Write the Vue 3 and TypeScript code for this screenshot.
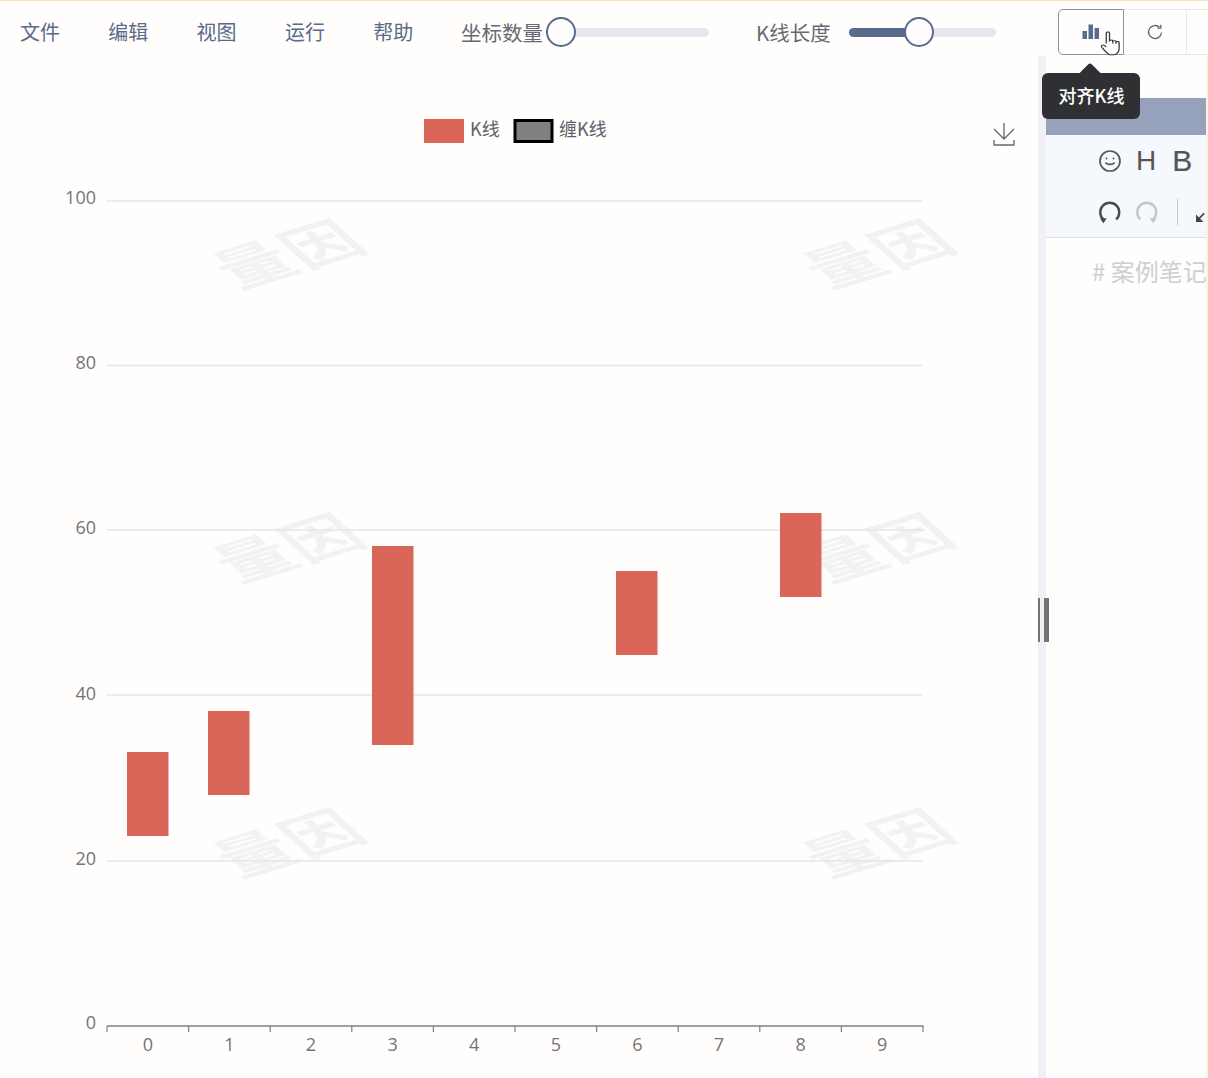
<template>
  <div class="page">
    <header class="topbar">
      <nav class="menu">
        <span v-for="m in menus" :key="m" class="menu-item">{{ m }}</span>
      </nav>

      <div class="slider-group count-group">
        <span class="slider-label">坐标数量</span>
        <div class="slider count-slider">
          <div class="track"></div>
          <div class="thumb" style="left: -1px"></div>
        </div>
      </div>

      <div class="slider-group length-group">
        <span class="slider-label">K线长度</span>
        <div class="slider length-slider">
          <div class="track"></div>
          <div class="fill"></div>
          <div class="thumb" style="left: 55px"></div>
        </div>
      </div>

      <div class="tool-buttons">
        <button class="tool-btn active">
          <svg width="18" height="16" viewBox="0 0 18 16">
            <rect x="0.5" y="7" width="4.500" height="8" fill="#5a6a8f" />
            <rect x="6.500" y="0.500" width="4.500" height="14.500" fill="#5a6a8f" />
            <rect x="12.500" y="4" width="4.500" height="11" fill="#5a6a8f" />
          </svg>
          <svg class="hand" width="20" height="26" viewBox="0 0 16 27" preserveAspectRatio="none">
            <path
              d="M5 14V3.200C5 1.800 7.600 1.800 7.600 3.200V12M7.600 11.500c0-1.400 2.600-1.400 2.600 0V14M10.200 12c0-1.300 2.600-1.300 2.600 0v2.400M12.800 13c0-1.300 2.500-1.300 2.500 0v6c0 3-1.600 5.600-3.600 6.600H7.500C5.500 24 3.500 21 1.400 18c-1-1.500.7-3 2-2L5 17.500"
              fill="#fff"
              stroke="#333"
              stroke-width="1"
              stroke-linejoin="round"
            />
          </svg>
        </button>
        <button class="tool-btn refresh">
          <svg width="18" height="18" viewBox="0 0 18 18" fill="none" stroke="#666" stroke-width="1.300">
            <path d="M15.500 9.500a6.500 6.500 0 1 1-2-5.200" />
            <path d="M14.800 1.800v3.400h-3.400" />
          </svg>
        </button>
        <button class="tool-btn rest"></button>
      </div>

      <div class="tooltip">对齐K线</div>
    </header>

    <main class="body">
      <section class="chart-pane">
        <svg class="chart" width="1038" height="1022" viewBox="0 56 1038 1022">
          <!-- watermark -->
          <text
            v-for="w in watermarks"
            :key="w.x + '-' + w.y"
            class="mark"
            :transform="`matrix(0.98 -0.3 0.65 0.59 ${w.x} ${w.y})`"
          >量因</text>

          <!-- legend -->
          <rect x="424" y="119" width="40" height="24" fill="#da665a" />
          <text class="legend-text" x="470" y="136">K线</text>
          <rect x="515" y="120.500" width="37" height="21" fill="#808080" stroke="#000" stroke-width="3" />
          <text class="legend-text" x="559" y="136">缠K线</text>

          <!-- download -->
          <g fill="none" stroke="#666" stroke-width="1.300">
            <path d="M1004 123v16M994 129l10 10 10-10" />
            <path d="M994 140v5h20v-5" />
          </g>

          <!-- y axis -->
          <g v-for="g in yTicks" :key="g.label">
            <line v-if="g.label !== '0'" x1="107" x2="923" :y1="g.y" :y2="g.y" stroke="#e6e6e8" stroke-width="1.500" />
            <text class="axis-text" x="96" :y="g.labelY" text-anchor="end">{{ g.label }}</text>
          </g>

          <!-- x axis -->
          <line x1="107" x2="923.500" y1="1026" y2="1026" stroke="#7f8085" stroke-width="1.500" />
          <line
            v-for="i in 11"
            :key="'t' + i"
            :x1="tickX(i - 1)"
            :x2="tickX(i - 1)"
            y1="1026"
            y2="1032"
            stroke="#7f8085"
            stroke-width="1.200"
          />
          <text
            v-for="i in 10"
            :key="'l' + i"
            class="axis-text"
            :x="tickX(i - 1) + 40.800"
            y="1051"
            text-anchor="middle"
          >{{ i - 1 }}</text>

          <!-- bars -->
          <rect
            v-for="b in bars"
            :key="b.x"
            :x="b.x"
            :y="b.top"
            width="41.500"
            :height="b.bottom - b.top"
            fill="#da665a"
          />
        </svg>
      </section>

      <div class="splitter">
        <div class="handle"></div>
      </div>

      <aside class="notes">
        <div class="notes-head"></div>
        <div class="notes-toolbar">
          <div class="icon-row">
            <svg width="24" height="24" viewBox="0 0 24 24" fill="none" stroke="#555" stroke-width="1.700">
              <circle cx="12" cy="12" r="10" />
              <path d="M7.500 13.500c1 2.500 8 2.500 9 0" />
              <circle cx="8.500" cy="9.500" r="0.900" fill="#555" stroke="none" />
              <circle cx="15.500" cy="9.500" r="0.900" fill="#555" stroke="none" />
            </svg>
            <span class="letter">H</span>
            <span class="letter bold">B</span>
          </div>
          <div class="icon-row second">
            <svg width="24" height="26" viewBox="0 0 24 26" fill="none" stroke="#4a4a4a" stroke-width="2.400">
              <path d="M5.500 20.500A9.700 9.700 0 1 1 18.500 20.500" />
              <path d="M2 19.500h7l-3.500 5z" fill="#4a4a4a" stroke="none" />
            </svg>
            <svg width="24" height="26" viewBox="0 0 24 26" fill="none" stroke="#c6c6c9" stroke-width="2.400">
              <path d="M5.500 20.500A9.700 9.700 0 1 1 18.500 20.500" />
              <path d="M15 19.500h7l-3.500 5z" fill="#c6c6c9" stroke="none" />
            </svg>
            <span class="tb-divider"></span>
            <svg class="shrink" width="11" height="11" viewBox="0 0 12 12">
              <path d="M10 1.500 4.500 7M2 5v5h5z" stroke="#444" stroke-width="1.800" fill="#444" />
            </svg>
          </div>
        </div>
        <div class="editor">
          <span class="placeholder"># 案例笔记</span>
        </div>
      </aside>
    </main>
  </div>
</template>

<script setup lang="ts">
const menus = ['文件', '编辑', '视图', '运行', '帮助']

const yTicks = [
  { label: '100', y: 201, labelY: 204 },
  { label: '80', y: 365.5, labelY: 369 },
  { label: '60', y: 530, labelY: 534 },
  { label: '40', y: 695, labelY: 700 },
  { label: '20', y: 861, labelY: 865 },
  { label: '0', y: 1026, labelY: 1029 },
]

const bars = [
  { x: 127, top: 752, bottom: 836 },
  { x: 208, top: 711, bottom: 795 },
  { x: 372, top: 546, bottom: 745 },
  { x: 616, top: 571, bottom: 655 },
  { x: 780, top: 513, bottom: 597 },
]

const watermarks = [
  { x: 238, y: 289 },
  { x: 828, y: 289 },
  { x: 238, y: 583 },
  { x: 828, y: 583 },
  { x: 238, y: 878 },
  { x: 828, y: 878 },
]

const tickX = (i: number) => 107 + i * 81.6
</script>

<style>
html,
body {
  margin: 0;
  background: #fffefd;
}
</style>

<style scoped>
.page {
  width: 1208px;
  height: 1078px;
  overflow: hidden;
  display: flex;
  flex-direction: column;
  background: #fffefd;
  font-family: "Noto Sans CJK SC", "Noto Sans", sans-serif;
}

.topbar {
  position: relative;
  flex: none;
  height: 56px;
  border-top: 1px solid #f6e0b4;
  display: flex;
  align-items: flex-start;
  padding-left: 20px;
  box-sizing: border-box;
}

.menu {
  display: flex;
  gap: 48.300px;
  width: 441px;
  flex: none;
  margin-top: 16px;
}

.menu-item {
  font-size: 20px;
  line-height: 29px;
  color: #5c6a8a;
}

.slider-group {
  display: flex;
  flex: none;
  margin-top: 17px;
}

.slider-label {
  font-size: 20.500px;
  line-height: 29px;
  color: #676a72;
  white-space: nowrap;
}

.count-group {
  width: 295px;
}

.count-slider {
  margin-left: 4px;
  margin-top: -1px;
  width: 162px;
}

.length-group {
  width: 302px;
}

.length-slider {
  margin-left: 18px;
  margin-top: -1px;
  width: 147px;
}

.slider {
  position: relative;
  height: 29px;
}

.track {
  position: absolute;
  left: 0;
  right: 0;
  top: 11px;
  height: 9px;
  border-radius: 5px;
  background: #e6e6ef;
}

.fill {
  position: absolute;
  left: 0;
  top: 11px;
  width: 62px;
  height: 9px;
  border-radius: 5px 0 0 5px;
  background: #5a6a8f;
}

.thumb {
  position: absolute;
  top: 0;
  width: 30px;
  height: 30px;
  box-sizing: border-box;
  border: 2.500px solid #5a6a8f;
  border-radius: 50%;
  background: #fffefd;
}

.tool-buttons {
  display: flex;
  flex: none;
  margin-top: 8px;
  height: 46px;
  width: 150px;
}

.tool-btn {
  position: relative;
  box-sizing: border-box;
  height: 46px;
  padding: 0;
  background: transparent;
  border: 1px solid #e6e6ea;
  border-left: none;
  display: flex;
  align-items: center;
  justify-content: center;
}

.tool-btn.active {
  width: 66px;
  border: 1px solid #8b91a8;
  border-radius: 5px 0 0 5px;
}

.tool-btn.refresh {
  width: 64px;
}

.tool-btn.rest {
  width: 21px;
  border-right: none;
}

.hand {
  position: absolute;
  left: 41px;
  top: 20px;
}

.tooltip {
  position: absolute;
  left: 1042px;
  top: 72px;
  z-index: 3;
  box-sizing: border-box;
  width: 98px;
  height: 46px;
  padding-left: 1px;
  border-radius: 6px;
  background: #2f3033;
  color: #fff;
  font-size: 18px;
  font-weight: 500;
  line-height: 44px;
  text-align: center;
}

.tooltip::before {
  content: "";
  position: absolute;
  left: 40px;
  top: -7px;
  width: 16px;
  height: 16px;
  background: #2f3033;
  border-radius: 2px;
  transform: rotate(45deg);
  z-index: -1;
}

.body {
  flex: 1;
  min-height: 0;
  display: flex;
}

.chart-pane {
  flex: none;
  width: 1038px;
}

.chart {
  display: block;
}

.mark {
  font-size: 66px;
  font-weight: 700;
  fill: #f2f2f3;
  letter-spacing: 2px;
  filter: blur(0.7px);
}

.legend-text {
  font-size: 18px;
  fill: #5f6168;
}

.axis-text {
  font-size: 18px;
  font-family: "Open Sans", sans-serif;
  fill: #747478;
}

.splitter {
  position: relative;
  flex: none;
  width: 8px;
  background: #f0f0f5;
}

.handle {
  position: absolute;
  left: 0;
  top: 542px;
  width: 11px;
  height: 44px;
  box-sizing: border-box;
  border-left: 2px solid #737373;
  border-right: 5px solid #737373;
  background: #f0f0f5;
}

.notes {
  flex: 1;
  min-width: 0;
  overflow: hidden;
  padding-top: 42px;
  border-right: 2px solid #fdf3df;
  box-sizing: border-box;
}

.notes-head {
  height: 37px;
  background: #96a1bc;
}

.notes-toolbar {
  height: 103px;
  box-sizing: border-box;
  padding: 13px 0 0 52px;
  background: #f5f8fd;
  border-bottom: 1px solid #dfe0e3;
}

.icon-row {
  display: flex;
  align-items: center;
  height: 26px;
  white-space: nowrap;
}

.icon-row.second {
  margin-top: 25px;
}

.icon-row .letter {
  font-family: "Liberation Sans", sans-serif;
  font-size: 28px;
  line-height: 26px;
  color: #555;
  margin-left: 14px;
}

.icon-row .letter.bold {
  font-size: 30px;
  margin-left: 16px;
  -webkit-text-stroke: 0.2px #555;
}

.second svg + svg {
  margin-left: 13px;
}

.tb-divider {
  width: 1px;
  height: 26px;
  background: #c8c8cc;
  margin: 0 17px 0 19px;
}

.second svg.shrink {
  margin-left: 0;
  flex: none;
  margin-top: 10px;
}

.editor {
  padding: 18px 0 0 46px;
}

.placeholder {
  font-size: 24px;
  line-height: 30px;
  color: #cfcfd2;
  white-space: nowrap;
}
</style>
